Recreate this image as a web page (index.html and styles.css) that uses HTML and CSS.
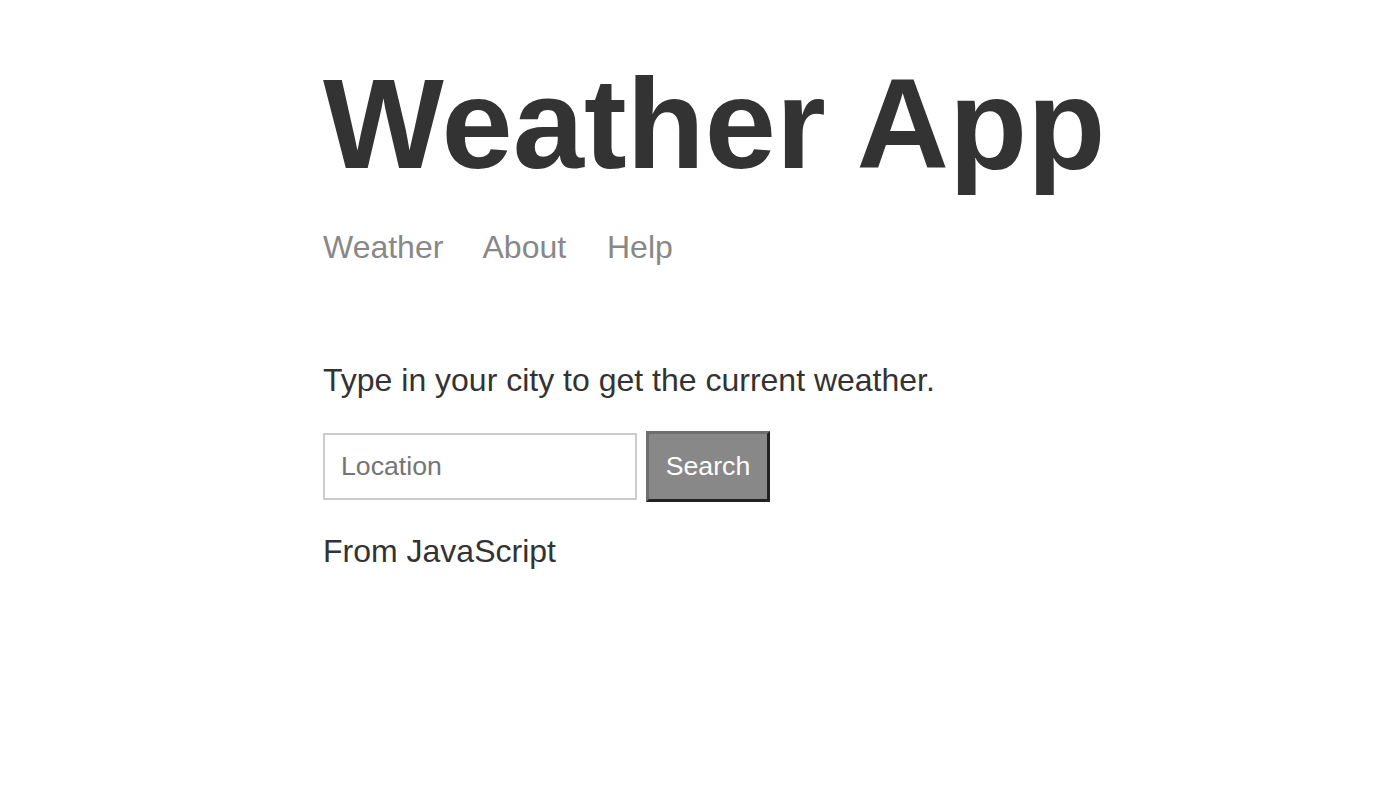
FILE: index.html
```html
<!DOCTYPE html>
<html lang="en">
<head>
<meta charset="utf-8">
<title>Weather App</title>
<link rel="stylesheet" href="styles.css">
</head>
<body>
<div class="page">
  <header class="header">
    <h1 class="title">Weather App</h1>
    <nav class="nav">
      <a class="nav-link" href="#">Weather</a>
      <a class="nav-link" href="#">About</a>
      <a class="nav-link" href="#">Help</a>
    </nav>
  </header>
  <main class="main-content">
    <p class="text">Type in your city to get the current weather.</p>
    <form class="search-form">
      <input class="location-input" type="text" placeholder="Location">
      <button class="search-button" type="button">Search</button>
    </form>
    <p class="text">From JavaScript</p>
  </main>
</div>
</body>
</html>
```

FILE: styles.css
```css
html, body {
  margin: 0;
  padding: 0;
  background: #ffffff;
}

body {
  color: #333333;
  font-family: "Liberation Sans", Arial, sans-serif;
}

.page {
  width: 728px;
  margin: 0 auto;
}

.header {
  padding-top: 50px;
  margin-bottom: 96px;
}

.title {
  font-size: 128px;
  font-weight: bold;
  line-height: normal;
  white-space: nowrap;
  margin: 0 0 32px 0;
  color: #333333;
}

.nav {
  font-size: 32px;
  line-height: normal;
}

.nav-link {
  color: #888888;
  text-decoration: none;
  margin-right: 32px;
}

.text {
  font-size: 32px;
  line-height: normal;
  margin: 0 0 32px 0;
}

.search-form {
  display: flex;
  align-items: center;
  gap: 9px;
  margin: 0 0 31px 0;
}

.location-input {
  box-sizing: border-box;
  width: 314px;
  border: 2px solid #cccccc;
  padding: 16px;
  margin: 0;
  font-family: "Liberation Sans", Arial, sans-serif;
  font-size: 26.67px;
  line-height: normal;
  color: #333333;
  outline: none;
}

.location-input::placeholder {
  color: #757575;
}

.search-button {
  box-sizing: border-box;
  height: 71px;
  width: 124px;
  margin: 0;
  padding: 0;
  border-style: solid;
  border-width: 3px;
  border-color: #6e6e6e #222222 #222222 #6e6e6e;
  background: #888888;
  color: #ffffff;
  font-family: "Liberation Sans", Arial, sans-serif;
  font-size: 26.67px;
  line-height: normal;
  cursor: pointer;
}
```
